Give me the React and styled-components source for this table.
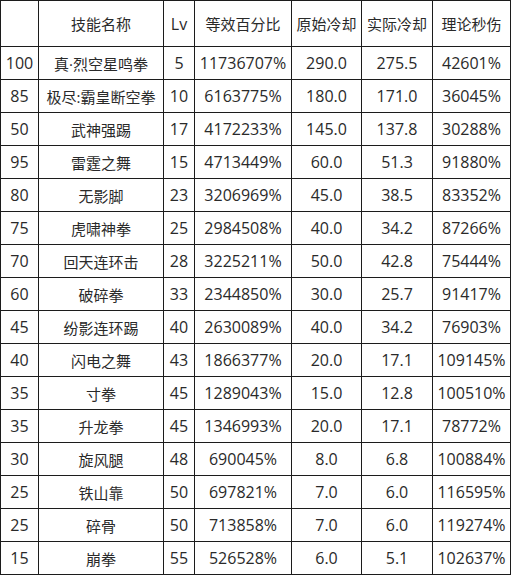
import styled, { createGlobalStyle } from 'styled-components';

const GlobalStyle = createGlobalStyle`
  html, body {
    margin: 0;
    padding: 0;
    background: #ffffff;
  }
`;

const Table = styled.div`
  display: grid;
  grid-template-columns: 37px 124px 30px 96px 69px 70px 77px;
  grid-template-rows: 45px;
  grid-auto-rows: 32px;
  gap: 1px;
  padding: 1px;
  width: 511px;
  box-sizing: border-box;
  background: #1c1c1c;
  font-family: "Open Sans", "Noto Sans CJK SC", sans-serif;
  font-size: 16px;
  color: #2a2a2a;
`;

const Cell = styled.div`
  display: flex;
  align-items: center;
  justify-content: center;
  background: #ffffff;
  white-space: nowrap;
  overflow: hidden;
`;

const HeadCell = styled(Cell)`
  font-size: 15px;
`;

const NameCell = styled(Cell)`
  font-size: 15px;
`;

const headers = ['', '技能名称', 'Lv', '等效百分比', '原始冷却', '实际冷却', '理论秒伤'];

const rows = [
  ['100', '真·烈空星鸣拳', '5', '11736707%', '290.0', '275.5', '42601%'],
  ['85', '极尽:霸皇断空拳', '10', '6163775%', '180.0', '171.0', '36045%'],
  ['50', '武神强踢', '17', '4172233%', '145.0', '137.8', '30288%'],
  ['95', '雷霆之舞', '15', '4713449%', '60.0', '51.3', '91880%'],
  ['80', '无影脚', '23', '3206969%', '45.0', '38.5', '83352%'],
  ['75', '虎啸神拳', '25', '2984508%', '40.0', '34.2', '87266%'],
  ['70', '回天连环击', '28', '3225211%', '50.0', '42.8', '75444%'],
  ['60', '破碎拳', '33', '2344850%', '30.0', '25.7', '91417%'],
  ['45', '纷影连环踢', '40', '2630089%', '40.0', '34.2', '76903%'],
  ['40', '闪电之舞', '43', '1866377%', '20.0', '17.1', '109145%'],
  ['35', '寸拳', '45', '1289043%', '15.0', '12.8', '100510%'],
  ['35', '升龙拳', '45', '1346993%', '20.0', '17.1', '78772%'],
  ['30', '旋风腿', '48', '690045%', '8.0', '6.8', '100884%'],
  ['25', '铁山靠', '50', '697821%', '7.0', '6.0', '116595%'],
  ['25', '碎骨', '50', '713858%', '7.0', '6.0', '119274%'],
  ['15', '崩拳', '55', '526528%', '6.0', '5.1', '102637%'],
];

const App = () => {
  return (
    <>
      <GlobalStyle />
      <Table>
        {headers.map((h, i) =>
          i === 2 ? (
            <Cell key={'h' + i}>{h}</Cell>
          ) : (
            <HeadCell key={'h' + i}>{h}</HeadCell>
          )
        )}
        {rows.map((row, r) =>
          row.map((v, c) =>
            c === 1 ? (
              <NameCell key={r + '-' + c}>{v}</NameCell>
            ) : (
              <Cell key={r + '-' + c}>{v}</Cell>
            )
          )
        )}
      </Table>
    </>
  );
};

export default App;
